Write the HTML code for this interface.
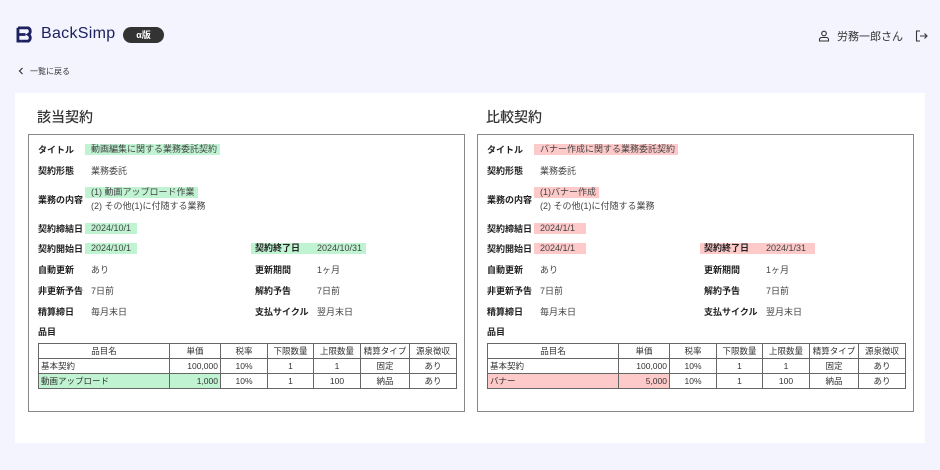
<!DOCTYPE html>
<html><head><meta charset="utf-8"><style>
*{margin:0;padding:0;box-sizing:border-box}
body{width:940px;height:470px;background:#f3f4fd;font-family:"Liberation Sans","Noto Sans CJK JP",sans-serif;color:#333;position:relative;overflow:hidden;white-space:nowrap}
.abs{position:absolute}
.logo{left:16px;top:25px;font-size:16px;color:#1d2160;display:flex;align-items:center}
.badge{left:123px;top:27px;width:41px;height:16px;border-radius:8px;background:#333;color:#fff;font-size:9px;text-align:center;line-height:16px;font-weight:bold}
.card{left:15px;top:93px;width:910px;height:350px;background:#fff}
h2{position:absolute;font-size:14px;font-weight:500;color:#333;top:107px}
.box{position:absolute;top:134px;width:437px;height:278px;border:1px solid #888;background:#fff;font-size:9px}
.l{position:absolute;left:9px;font-weight:bold;color:#222;line-height:12px}
.v{position:absolute;left:62px;line-height:12px;color:#444}
.hl{position:absolute;height:11px;line-height:11px;padding:0 3px 0 6px;color:#444}
.g .hl{background:#c0f3d2}.p .hl{background:#fdc9c9}
.rl{position:absolute;left:226px;font-weight:bold;color:#222;line-height:12px}
.rv{position:absolute;left:288px;line-height:12px;color:#444}
table{position:absolute;left:9px;top:208px;border-collapse:collapse;font-size:8.5px;color:#333;table-layout:fixed;width:418px}
td{border:1px solid #666;height:15px;padding:0 1px;text-align:center;line-height:13px;overflow:hidden}
td.r{text-align:right;padding-right:2px}td.lf{text-align:left;padding-left:2px}
.g td.h{background:#c0f3d2}.p td.h{background:#fdc9c9}
</style></head><body>
<div class="abs logo"><svg width="19" height="17" viewBox="0 0 20 18"><path d="M2 2h11a4 4 0 0 1 0 7a4 4 0 0 1 0 7H6" fill="none" stroke="#1d2160" stroke-width="3"/><path d="M2 2v14h4M2 9h8" fill="none" stroke="#1d2160" stroke-width="3"/></svg><span style="margin-left:6px;letter-spacing:0.3px">BackSimp</span></div>
<div class="abs badge">α版</div>
<div class="abs" style="left:818px;top:28px;font-size:11px;color:#333;display:flex;align-items:center">
<svg width="12" height="12" viewBox="0 0 12 12" fill="none" stroke="#333" stroke-width="1.1"><circle cx="6" cy="3.5" r="2.3"/><path d="M1.5 11v-1.5a2 2 0 0 1 2-2h5a2 2 0 0 1 2 2V11z"/></svg>
<span style="margin-left:7px">労務一郎さん</span>
<svg style="margin-left:12px" width="13" height="12" viewBox="0 0 13 12" fill="none" stroke="#333" stroke-width="1.1"><path d="M5 1H1.5v10H5M5 6h7M9.5 3.5L12 6l-2.5 2.5"/></svg></div>
<svg class="abs" style="left:18px;top:67px" width="6" height="8" viewBox="0 0 6 8" fill="none" stroke="#333" stroke-width="1.2"><path d="M4.5 1L1.5 4l3 3"/></svg>
<div class="abs" style="left:30px;top:66px;font-size:8px;color:#333">一覧に戻る</div>
<div class="abs card"></div>
<h2 style="left:37px">該当契約</h2>
<h2 style="left:486px">比較契約</h2>

<div class="box g" style="left:28px">
<div class="l" style="top:9px">タイトル</div><div class="hl" style="left:56px;top:9px">動画編集に関する業務委託契約</div>
<div class="l" style="top:30px">契約形態</div><div class="v" style="top:30px">業務委託</div>
<div class="l" style="top:59px">業務の内容</div><div class="hl" style="left:56px;top:52px">(1) 動画アップロード作業</div><div class="v" style="top:65px">(2) その他(1)に付随する業務</div>
<div class="l" style="top:88px">契約締結日</div><div class="hl" style="left:56px;top:88px;min-width:52px">2024/10/1</div>
<div class="l" style="top:108px">契約開始日</div><div class="hl" style="left:56px;top:108px;min-width:52px">2024/10/1</div>
<div class="hl" style="left:222px;top:108px;width:115px;padding-left:4px;font-weight:bold;color:#222">契約終了日<span style="position:absolute;left:66px;font-weight:normal;color:#444">2024/10/31</span></div>
<div class="l" style="top:129px">自動更新</div><div class="v" style="top:129px">あり</div><div class="rl" style="top:129px">更新期間</div><div class="rv" style="top:129px">1ヶ月</div>
<div class="l" style="top:150px">非更新予告</div><div class="v" style="top:150px">7日前</div><div class="rl" style="top:150px">解約予告</div><div class="rv" style="top:150px">7日前</div>
<div class="l" style="top:171px">精算締日</div><div class="v" style="top:171px">毎月末日</div><div class="rl" style="top:171px">支払サイクル</div><div class="rv" style="top:171px">翌月末日</div>
<div class="l" style="top:191px">品目</div>
<table><tr><td style="width:131px">品目名</td><td style="width:51px">単価</td><td style="width:47px">税率</td><td style="width:46px">下限数量</td><td style="width:47px">上限数量</td><td style="width:49px">精算タイプ</td><td style="width:47px">源泉徴収</td></tr>
<tr><td class="lf">基本契約</td><td class="r">100,000</td><td>10%</td><td>1</td><td>1</td><td>固定</td><td>あり</td></tr>
<tr><td class="lf h">動画アップロード</td><td class="r h">1,000</td><td>10%</td><td>1</td><td>100</td><td>納品</td><td>あり</td></tr></table>
</div>

<div class="box p" style="left:477px">
<div class="l" style="top:9px">タイトル</div><div class="hl" style="left:56px;top:9px">バナー作成に関する業務委託契約</div>
<div class="l" style="top:30px">契約形態</div><div class="v" style="top:30px">業務委託</div>
<div class="l" style="top:59px">業務の内容</div><div class="hl" style="left:56px;top:52px">(1)バナー作成</div><div class="v" style="top:65px">(2) その他(1)に付随する業務</div>
<div class="l" style="top:88px">契約締結日</div><div class="hl" style="left:56px;top:88px;min-width:52px">2024/1/1</div>
<div class="l" style="top:108px">契約開始日</div><div class="hl" style="left:56px;top:108px;min-width:52px">2024/1/1</div>
<div class="hl" style="left:222px;top:108px;width:115px;padding-left:4px;font-weight:bold;color:#222">契約終了日<span style="position:absolute;left:66px;font-weight:normal;color:#444">2024/1/31</span></div>
<div class="l" style="top:129px">自動更新</div><div class="v" style="top:129px">あり</div><div class="rl" style="top:129px">更新期間</div><div class="rv" style="top:129px">1ヶ月</div>
<div class="l" style="top:150px">非更新予告</div><div class="v" style="top:150px">7日前</div><div class="rl" style="top:150px">解約予告</div><div class="rv" style="top:150px">7日前</div>
<div class="l" style="top:171px">精算締日</div><div class="v" style="top:171px">毎月末日</div><div class="rl" style="top:171px">支払サイクル</div><div class="rv" style="top:171px">翌月末日</div>
<div class="l" style="top:191px">品目</div>
<table><tr><td style="width:131px">品目名</td><td style="width:51px">単価</td><td style="width:47px">税率</td><td style="width:46px">下限数量</td><td style="width:47px">上限数量</td><td style="width:49px">精算タイプ</td><td style="width:47px">源泉徴収</td></tr>
<tr><td class="lf">基本契約</td><td class="r">100,000</td><td>10%</td><td>1</td><td>1</td><td>固定</td><td>あり</td></tr>
<tr><td class="lf h">バナー</td><td class="r h">5,000</td><td>10%</td><td>1</td><td>100</td><td>納品</td><td>あり</td></tr></table>
</div>
</body></html>
